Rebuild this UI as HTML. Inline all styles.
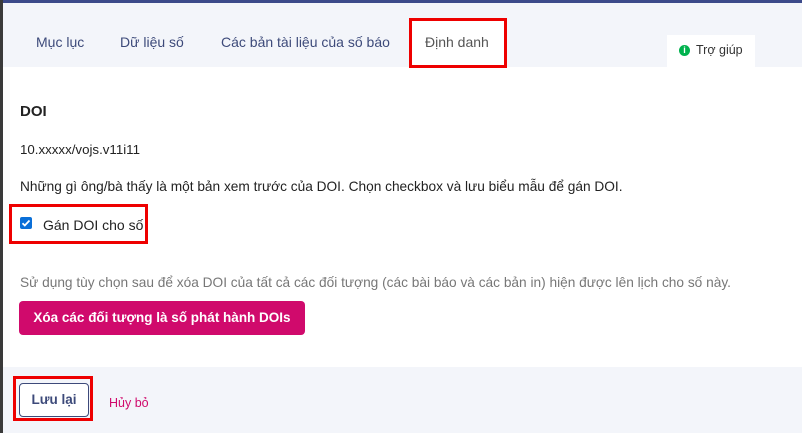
<!DOCTYPE html>
<html><head><meta charset="utf-8"><style>
*{margin:0;padding:0;box-sizing:border-box}
body{width:802px;height:433px;overflow:hidden;background:#fff;font-family:"Liberation Sans",sans-serif;position:relative;color:#222}
.topbar{position:absolute;left:0;top:0;width:802px;height:3px;background:#3c4a8a}
.lstrip{position:absolute;left:0;top:0;width:3px;height:433px;background:#3a3a3a}
.tabs{position:absolute;left:3px;top:3px;right:0;height:64px;background:#f3f5fa}
.tab{position:absolute;top:34px;font-size:14px;color:#3d4a7a}
.red{position:absolute;border:3px solid #e00}
.help{position:absolute;left:667px;top:35px;width:88px;height:32px;background:#fff;font-size:12.5px;color:#333}
.abs{position:absolute;font-size:13px}
.footer{position:absolute;left:3px;top:367px;right:0;height:66px;background:#f3f5fa}
</style></head><body>
<div class="topbar"></div>
<div class="tabs"></div>
<div class="lstrip"></div>
<div style="position:absolute;left:412px;top:21px;width:92px;height:46px;background:#fff"></div>
<div class="tab" style="left:36px">Mục lục</div>
<div class="tab" style="left:120px">Dữ liệu số</div>
<div class="tab" style="left:221px">Các bản tài liệu của số báo</div>
<div class="tab" style="left:425px;color:#555">Định danh</div>
<div class="red" style="left:409px;top:18px;width:98px;height:50px"></div>
<div class="help"><span style="position:absolute;left:12px;top:10px;width:11px;height:11px;border-radius:50%;background:#00b24e;color:#fff;font-size:9px;font-weight:bold;text-align:center;line-height:11px">i</span><span style="position:absolute;left:29px;top:8px">Trợ giúp</span></div>
<div class="abs" style="left:20px;top:103px;font-size:15px;font-weight:bold;color:#222">DOI</div>
<div class="abs" style="left:20px;top:142px;font-size:13.3px">10.xxxxx/vojs.v11i11</div>
<div class="abs" style="left:20px;top:179px;font-size:13.7px">Những gì ông/bà thấy là một bản xem trước của DOI. Chọn checkbox và lưu biểu mẫu để gán DOI.</div>
<div style="position:absolute;left:20px;top:217px;width:12px;height:12px;background:#0a6fd8;border-radius:2px"><svg width="12" height="12" viewBox="0 0 12 12" style="position:absolute;left:0;top:0"><path d="M2.5 6.2l2.3 2.3 4.7-5" stroke="#fff" stroke-width="1.8" fill="none"/></svg></div>
<div class="abs" style="left:43px;top:217px;font-size:14px">Gán DOI cho số</div>
<div class="red" style="left:9px;top:204px;width:139px;height:40px"></div>
<div class="abs" style="left:20px;top:275px;color:#777;font-size:13.7px">Sử dụng tùy chọn sau để xóa DOI của tất cả các đối tượng (các bài báo và các bản in) hiện được lên lịch cho số này.</div>
<div style="position:absolute;left:19px;top:301px;width:286px;height:34px;background:#d00a6c;border-radius:4px;color:#fff;font-weight:bold;font-size:13.5px;text-align:center;line-height:34px">Xóa các đối tượng là số phát hành DOIs</div>
<div class="footer"></div>
<div style="position:absolute;left:19px;top:383px;width:70px;height:34px;background:#fff;border:1px solid #3d4a7a;border-radius:4px;color:#3d4a7a;font-weight:bold;font-size:13.5px;text-align:center;line-height:32px">Lưu lại</div>
<div class="red" style="left:13px;top:376px;width:80px;height:45px"></div>
<div class="abs" style="left:109px;top:396px;color:#d00a6c;font-size:12.5px">Hủy bỏ</div>
</body></html>
